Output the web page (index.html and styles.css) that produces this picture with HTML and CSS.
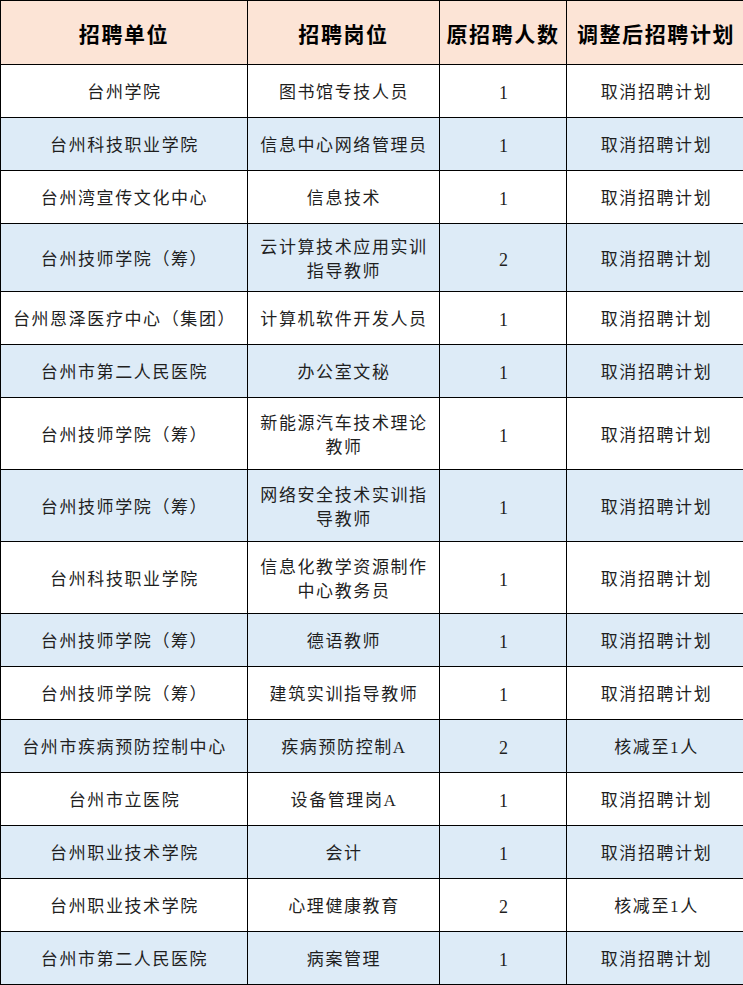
FILE: index.html
```html
<!DOCTYPE html>
<html lang="zh-CN">
<head>
<meta charset="utf-8">
<title>招聘计划调整</title>
<link rel="stylesheet" href="styles.css">
</head>
<body>
<div class="wrap">
<table class="plan">
  <colgroup>
    <col class="c1"><col class="c2"><col class="c3"><col class="c4">
  </colgroup>
  <thead>
    <tr class="head">
      <th>招聘单位</th><th>招聘岗位</th><th>原招聘人数</th><th>调整后招聘计划</th>
    </tr>
  </thead>
  <tbody>
    <tr class="s"><td>台州学院</td><td>图书馆专技人员</td><td class="num">1</td><td>取消招聘计划</td></tr>
    <tr class="s alt"><td>台州科技职业学院</td><td>信息中心网络管理员</td><td class="num">1</td><td>取消招聘计划</td></tr>
    <tr class="s"><td>台州湾宣传文化中心</td><td>信息技术</td><td class="num">1</td><td>取消招聘计划</td></tr>
    <tr class="d1 alt"><td>台州技师学院（筹）</td><td>云计算技术应用实训<br>指导教师</td><td class="num">2</td><td>取消招聘计划</td></tr>
    <tr class="s"><td>台州恩泽医疗中心（集团）</td><td>计算机软件开发人员</td><td class="num">1</td><td>取消招聘计划</td></tr>
    <tr class="s alt"><td>台州市第二人民医院</td><td>办公室文秘</td><td class="num">1</td><td>取消招聘计划</td></tr>
    <tr class="d"><td>台州技师学院（筹）</td><td>新能源汽车技术理论<br>教师</td><td class="num">1</td><td>取消招聘计划</td></tr>
    <tr class="d alt"><td>台州技师学院（筹）</td><td>网络安全技术实训指<br>导教师</td><td class="num">1</td><td>取消招聘计划</td></tr>
    <tr class="d"><td>台州科技职业学院</td><td>信息化教学资源制作<br>中心教务员</td><td class="num">1</td><td>取消招聘计划</td></tr>
    <tr class="s alt"><td>台州技师学院（筹）</td><td>德语教师</td><td class="num">1</td><td>取消招聘计划</td></tr>
    <tr class="s"><td>台州技师学院（筹）</td><td>建筑实训指导教师</td><td class="num">1</td><td>取消招聘计划</td></tr>
    <tr class="s alt"><td>台州市疾病预防控制中心</td><td>疾病预防控制A</td><td class="num">2</td><td>核减至1人</td></tr>
    <tr class="s"><td>台州市立医院</td><td>设备管理岗A</td><td class="num">1</td><td>取消招聘计划</td></tr>
    <tr class="s alt"><td>台州职业技术学院</td><td>会计</td><td class="num">1</td><td>取消招聘计划</td></tr>
    <tr class="s"><td>台州职业技术学院</td><td>心理健康教育</td><td class="num">2</td><td>核减至1人</td></tr>
    <tr class="s alt"><td>台州市第二人民医院</td><td>病案管理</td><td class="num">1</td><td>取消招聘计划</td></tr>
  </tbody>
</table>
</div>
</body>
</html>
```

FILE: styles.css
```css
html, body {
  margin: 0;
  padding: 0;
  background: #ffffff;
}
body {
  overflow: hidden;
  width: 743px;
}
.wrap {
  width: 743px;
  overflow: hidden;
}
.plan {
  border-collapse: collapse;
  table-layout: fixed;
  width: 745px;
  font-family: "Liberation Serif", "Noto Sans CJK SC", serif;
  color: #1f1f1f;
}
.c1 { width: 247px; }
.c2 { width: 192px; }
.c3 { width: 127px; }
.c4 { width: 179px; }
.plan th, .plan td {
  border: 1px solid #000;
  padding: 0;
  text-align: center;
  vertical-align: middle;
}
.plan th {
  height: 63px;
  background: #fce4d6;
  font-size: 21px;
  font-weight: bold;
  letter-spacing: 1.6px;
  color: #000;
}
.plan td {
  font-size: 17px;
  letter-spacing: 1.6px;
  line-height: 24px;
  padding-top: 4px;
  padding-left: 1px;
}
.plan td.num {
  font-size: 18px;
  letter-spacing: 0;
}
.s td { height: 48px; }
.d td { height: 67px; }
.d1 td { height: 63px; }
.alt td { background: #ddebf7; }
```
